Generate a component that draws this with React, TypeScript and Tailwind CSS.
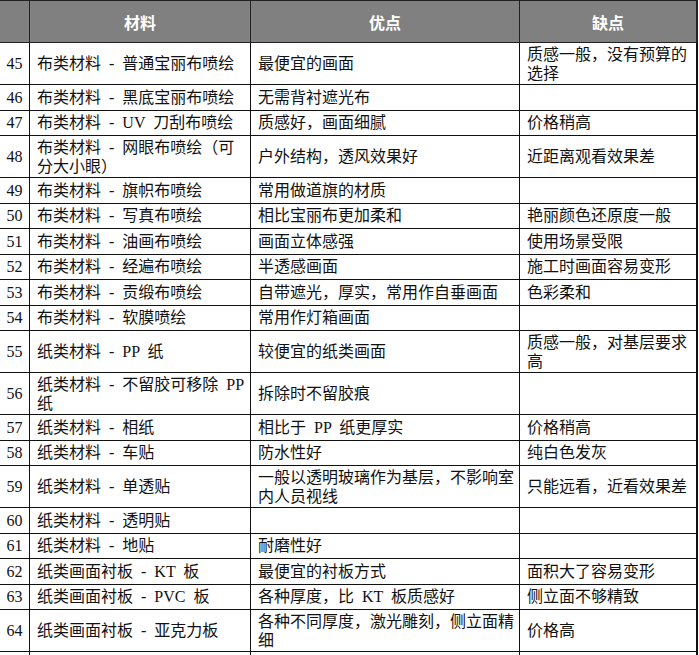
import React from "react";

type Row = { n: number | string; a: React.ReactNode; b: React.ReactNode; c: React.ReactNode };

const rows: Row[] = [
  { n: 45, a: "布类材料 - 普通宝丽布喷绘", b: "最便宜的画面", c: <>质感一般，没有预算的<br />选择</> },
  { n: 46, a: "布类材料 - 黑底宝丽布喷绘", b: "无需背衬遮光布", c: "" },
  { n: 47, a: "布类材料 - UV 刀刮布喷绘", b: "质感好，画面细腻", c: "价格稍高" },
  { n: 48, a: <>布类材料 - 网眼布喷绘（可<br />分大小眼）</>, b: "户外结构，透风效果好", c: "近距离观看效果差" },
  { n: 49, a: "布类材料 - 旗帜布喷绘", b: "常用做道旗的材质", c: "" },
  { n: 50, a: "布类材料 - 写真布喷绘", b: "相比宝丽布更加柔和", c: "艳丽颜色还原度一般" },
  { n: 51, a: "布类材料 - 油画布喷绘", b: "画面立体感强", c: "使用场景受限" },
  { n: 52, a: "布类材料 - 经遍布喷绘", b: "半透感画面", c: "施工时画面容易变形" },
  { n: 53, a: "布类材料 - 贡缎布喷绘", b: "自带遮光，厚实，常用作自垂画面", c: "色彩柔和" },
  { n: 54, a: "布类材料 - 软膜喷绘", b: "常用作灯箱画面", c: "" },
  { n: 55, a: "纸类材料 - PP 纸", b: "较便宜的纸类画面", c: <>质感一般，对基层要求<br />高</> },
  { n: 56, a: <>纸类材料 - 不留胶可移除 PP<br />纸</>, b: "拆除时不留胶痕", c: "" },
  { n: 57, a: "纸类材料 - 相纸", b: "相比于 PP 纸更厚实", c: "价格稍高" },
  { n: 58, a: "纸类材料 - 车贴", b: "防水性好", c: "纯白色发灰" },
  { n: 59, a: "纸类材料 - 单透贴", b: <>一般以透明玻璃作为基层，不影响室<br />内人员视线</>, c: "只能远看，近看效果差" },
  { n: 60, a: "纸类材料 - 透明贴", b: "", c: "" },
  { n: 61, a: "纸类材料 - 地贴", b: "耐磨性好", c: "" },
  { n: 62, a: "纸类画面衬板 - KT 板", b: "最便宜的衬板方式", c: "面积大了容易变形" },
  { n: 63, a: "纸类画面衬板 - PVC 板", b: "各种厚度，比 KT 板质感好", c: "侧立面不够精致" },
  { n: 64, a: "纸类画面衬板 - 亚克力板", b: <>各种不同厚度，激光雕刻，侧立面精<br />细</>, c: "价格高" },
  { n: "", a: "", b: "", c: "" },
];

const cell =
  "min-h-[25.5px] border-b border-r border-[#111] px-[7px] py-[1.5px] leading-[19px] flex items-center whitespace-nowrap";

export default function App() {
  return (
    <div
      className="w-[699px] h-[655px] overflow-hidden bg-white text-[16px] text-[#111] [word-spacing:4px]"
      style={{ fontFamily: '"Liberation Serif", "Noto Sans CJK SC", serif' }}
    >
      <div className="grid grid-cols-[30px_221px_269px_178px]">
        <div className="h-[43px] bg-[#808080] border-t border-b border-r border-[#222]" />
        {["材料", "优点", "缺点"].map((h, i) => (
          <div
            key={h}
            className={`h-[43px] bg-[#808080] border-t border-b border-[#222] flex items-center justify-center text-white font-bold ${
              i === 2 ? "border-r-2" : "border-r"
            }`}
            style={{ fontFamily: '"Noto Sans CJK SC", sans-serif' }}
          >
            {h}
          </div>
        ))}
        {rows.map((r, idx) => (
          <React.Fragment key={idx}>
            <div className={`${cell} justify-center px-0`}>{r.n}</div>
            <div className={cell}>
              <span>{r.a}</span>
            </div>
            <div className={cell}>
              <span>{r.b}</span>
            </div>
            <div className={`${cell} border-r-2`}>
              <span>{r.c}</span>
            </div>
          </React.Fragment>
        ))}
      </div>
    </div>
  );
}
